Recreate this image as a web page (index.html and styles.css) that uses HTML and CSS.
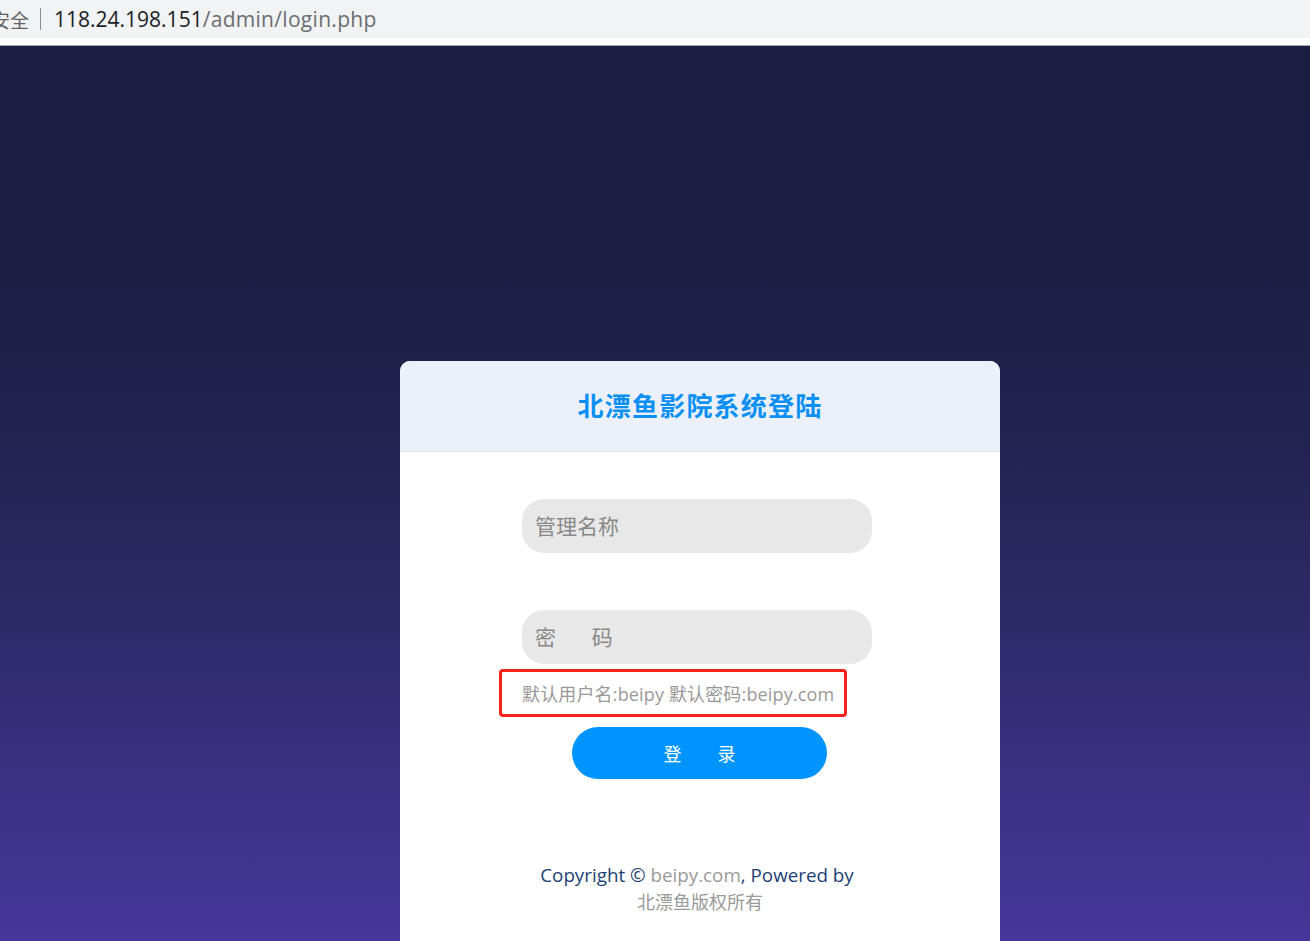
FILE: index.html
```html
<!DOCTYPE html>
<html lang="zh-CN">
<head>
<meta charset="utf-8">
<title>北漂鱼影院系统登陆</title>
<link rel="stylesheet" href="styles.css">
</head>
<body>
<div class="browser-bar">
  <span class="secure">安全</span>
  <span class="sep"></span>
  <span class="url"><span class="host">118.24.198.151</span><span class="path">/admin/login.php</span></span>
</div>
<div class="browser-gap"></div>
<main class="stage">
  <section class="card">
    <header class="card-head">
      <h1 class="title">北漂鱼影院系统登陆</h1>
    </header>
    <form class="card-body">
      <input class="field" type="text" placeholder="管理名称">
      <input class="field field-pass" type="password" placeholder="密&#8195;&#8194;&#8201;码">
      <div class="hint">默认用户名:beipy 默认密码:beipy.com</div>
      <button class="btn" type="button">登　　录</button>
      <footer class="copy">
        <div class="copy-line">Copyright © <span class="muted">beipy.com</span>, Powered by</div>
        <div class="muted owner">北漂鱼版权所有</div>
      </footer>
    </form>
  </section>
</main>
</body>
</html>
```
FILE: styles.css
```css
* { box-sizing: border-box; }
html, body { margin: 0; padding: 0; }
body {
  width: 1310px;
  height: 941px;
  overflow: hidden;
  font-family: "Open Sans", "Noto Sans CJK SC", sans-serif;
}
.browser-bar {
  height: 38px;
  background: #f1f3f4;
  display: flex;
  align-items: center;
  font-size: 21px;
  color: #5f6368;
  white-space: nowrap;
}
.secure { margin-left: -9px; font-family: "Noto Sans CJK SC", sans-serif; font-size: 19px; }
.sep {
  width: 1px;
  height: 22px;
  background: #8a8d91;
  margin: 0 13px 0 11px;
}
.host { color: #202124; }
.path { color: #6b6e72; letter-spacing: 0.3px; }
.browser-gap {
  height: 8px;
  background: #fff;
  border-bottom: 1px solid #a6a7ab;
}
.stage {
  height: 895px;
  overflow: hidden;
  background: linear-gradient(to bottom, #1b1d41 0%, #1c1e44 25%, #232352 45%, #2e2a69 65%, #3b3183 82%, #46369a 100%);
  padding-top: 315px;
}
.card {
  width: 600px;
  height: 700px;
  margin: 0 0 0 400px;
  background: #fff;
  border-radius: 10px 10px 0 0;
  overflow: hidden;
}
.card-head {
  height: 91px;
  background: #ecf0fb;
  border-bottom: 1px solid #e2e5ec;
  display: flex;
  align-items: center;
  justify-content: center;
}
.title {
  margin: 0;
  font-family: "Noto Sans CJK SC", sans-serif;
  font-weight: 700;
  font-size: 26px;
  color: #0a90f5;
  letter-spacing: 1.2px;
  padding-bottom: 4px;
}
.card-body {
  display: flex;
  flex-direction: column;
  padding-top: 47px;
}
.field {
  display: block;
  width: 350px;
  height: 54px;
  margin-left: 122px;
  border: 0;
  outline: none;
  border-radius: 22px;
  background: #e8e8e8;
  padding: 0 0 3px 13px;
  font-family: "Noto Sans CJK SC", sans-serif;
  font-size: 21px;
  color: #333;
}
.field::placeholder { color: #888; }
.field-pass { margin-top: 57px; }
.hint {
  margin: 5px 0 0 99px;
  width: 348px;
  height: 48px;
  border: 3px solid #f5231c;
  border-radius: 4px;
  padding-left: 20px;
  display: flex;
  align-items: center;
  font-size: 18px;
  letter-spacing: 0.15px;
  color: #999;
  white-space: nowrap;
}
.btn {
  margin: 10px 0 0 172px;
  width: 255px;
  height: 52px;
  border: 0;
  border-radius: 26px;
  background: #0094ff;
  color: #fff;
  font-family: "Noto Sans CJK SC", sans-serif;
  font-size: 18px;
  cursor: pointer;
}
.copy {
  margin-top: 83px;
  text-align: center;
  padding-right: 6px;
  font-size: 18px;
  line-height: 27px;
  color: #1d3f74;
}
.copy-line { font-size: 18.8px; }
.owner { padding-left: 6px; }
.muted { color: #9a9a9a; }
```
